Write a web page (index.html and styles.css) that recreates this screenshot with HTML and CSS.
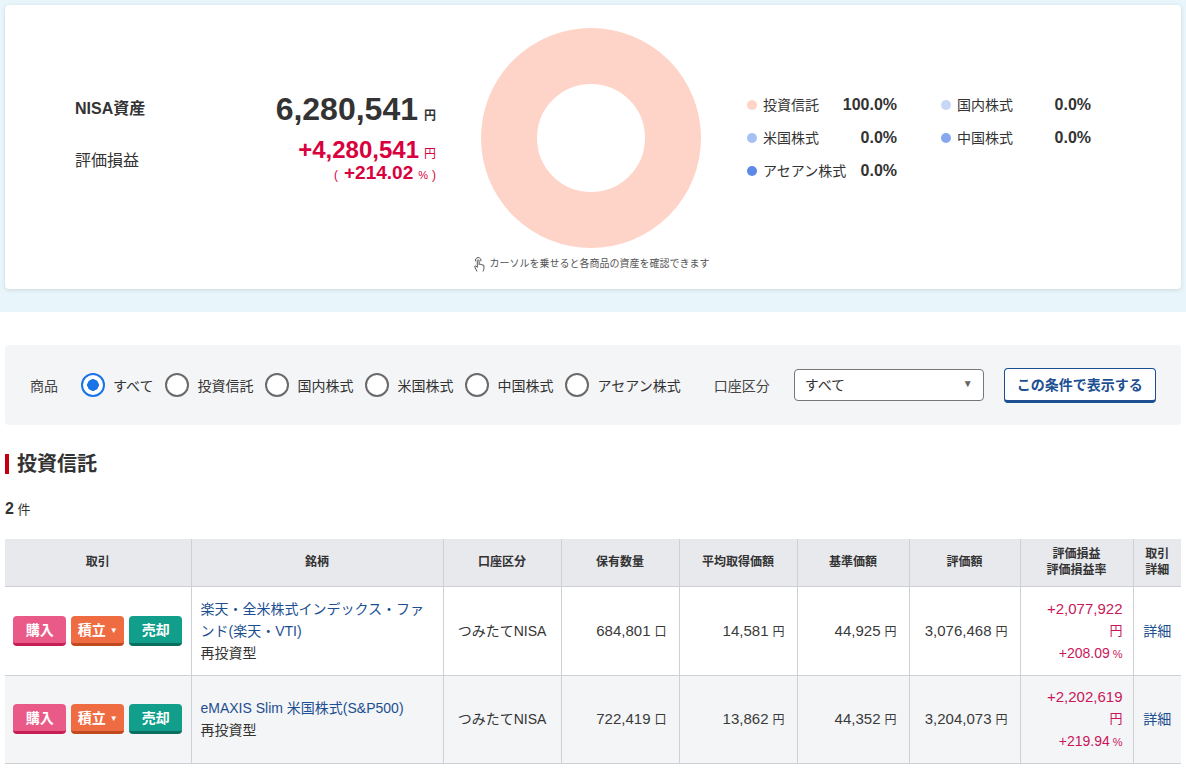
FILE: index.html
```html
<!DOCTYPE html>
<html lang="ja">

<head>
  <meta charset="UTF-8" />
  <meta name="viewport" content="width=device-width, initial-scale=1.0" />
  <title>NISA資産</title>
  <link rel="stylesheet" href="styles.css">
</head>

<body>
  <!-- 資産サマリー -->
  <div class="overview">
    <div class="card">
      <div class="summary">
        <div class="summary-row">
          <span class="summary-label total-label">NISA資産</span>
          <span class="total"><b>6,280,541</b><small>円</small></span>
        </div>
        <div class="summary-row">
          <span class="summary-label profit-label">評価損益</span>
          <div class="profit">
            <div class="profit-amount"><b>+4,280,541</b><small>円</small></div>
            <div class="profit-rate">(<b>+214.02</b><small>%</small>)</div>
          </div>
        </div>
      </div>
      <!-- 円グラフ -->
      <div class="donut"></div>
      <ul class="legend">
        <li><span class="dot dot-fund"></span>投資信託<span class="pct">100.0%</span></li>
        <li><span class="dot dot-jp"></span>国内株式<span class="pct">0.0%</span></li>
        <li><span class="dot dot-us"></span>米国株式<span class="pct">0.0%</span></li>
        <li><span class="dot dot-cn"></span>中国株式<span class="pct">0.0%</span></li>
        <li><span class="dot dot-asean"></span>アセアン株式<span class="pct">0.0%</span></li>
      </ul>
      <p class="hint">
        <svg width="13" height="16" viewBox="0 0 13 16" fill="none" stroke="#555" stroke-width="1" stroke-linejoin="round">
          <path d="M4 15.5 L1.8 11 C1.4 10.1 2.4 9.5 3 10.1 L4.3 11.4 V4.6 C4.3 3.5 6.1 3.5 6.1 4.6 V8.6 C6.1 7.8 7.7 7.8 7.7 8.6 V9 C7.7 8.2 9.3 8.2 9.3 9 V9.4 C9.3 8.7 10.9 8.7 10.9 9.6 V12.6 C10.9 13.8 10.4 14.8 9.9 15.5" />
          <path d="M2.6 5.4 A2.8 2.8 0 1 1 7.8 5.4" />
        </svg>
        カーソルを乗せると各商品の資産を確認できます
      </p>
    </div>
  </div>

  <!-- 絞り込み -->
  <form class="filter">
    <span class="filter-title">商品</span>
    <label class="opt"><input type="radio" name="kind" checked>すべて</label>
    <label class="opt"><input type="radio" name="kind">投資信託</label>
    <label class="opt"><input type="radio" name="kind">国内株式</label>
    <label class="opt"><input type="radio" name="kind">米国株式</label>
    <label class="opt"><input type="radio" name="kind">中国株式</label>
    <label class="opt"><input type="radio" name="kind">アセアン株式</label>
    <span class="filter-title account-title">口座区分</span>
    <div class="select">
      <select>
        <option>すべて</option>
        <option>つみたてNISA</option>
      </select>
    </div>
    <button type="button" class="submit">この条件で表示する</button>
  </form>

  <h2 class="section-title">投資信託</h2>
  <p class="count"><b>2</b> 件</p>

  <table class="holdings">
    <colgroup>
      <col style="width: 186px">
      <col style="width: 252px">
      <col style="width: 118px">
      <col style="width: 118px">
      <col style="width: 118px">
      <col style="width: 112px">
      <col style="width: 111px">
      <col style="width: 113px">
      <col style="width: 48px">
    </colgroup>
    <thead>
      <tr>
        <th>取引</th>
        <th>銘柄</th>
        <th>口座区分</th>
        <th>保有数量</th>
        <th>平均取得価額</th>
        <th>基準価額</th>
        <th>評価額</th>
        <th>評価損益<br>評価損益率</th>
        <th>取引<br>詳細</th>
      </tr>
    </thead>
    <tbody>
      <tr>
        <td class="trade">
          <a href="javaScript:;" class="btn btn-buy">購入</a><a href="javaScript:;" class="btn btn-plan">積立<i>▼</i></a><a href="javaScript:;" class="btn btn-sell">売却</a>
        </td>
        <td class="fund"><a href="javaScript:;">楽天・全米株式インデックス・ファンド(楽天・VTI)</a><br>再投資型</td>
        <td class="center">つみたてNISA</td>
        <td class="num">684,801<small>口</small></td>
        <td class="num">14,581<small>円</small></td>
        <td class="num">44,925<small>円</small></td>
        <td class="num">3,076,468<small>円</small></td>
        <td class="gain">+2,077,922<small class="unit-line">円</small><span class="rate">+208.09<small>%</small></span></td>
        <td class="center"><a href="javaScript:;">詳細</a></td>
      </tr>
      <tr>
        <td class="trade">
          <a href="javaScript:;" class="btn btn-buy">購入</a><a href="javaScript:;" class="btn btn-plan">積立<i>▼</i></a><a href="javaScript:;" class="btn btn-sell">売却</a>
        </td>
        <td class="fund"><a href="javaScript:;">eMAXIS Slim 米国株式(S&amp;P500)</a><br>再投資型</td>
        <td class="center">つみたてNISA</td>
        <td class="num">722,419<small>口</small></td>
        <td class="num">13,862<small>円</small></td>
        <td class="num">44,352<small>円</small></td>
        <td class="num">3,204,073<small>円</small></td>
        <td class="gain">+2,202,619<small class="unit-line">円</small><span class="rate">+219.94<small>%</small></span></td>
        <td class="center"><a href="javaScript:;">詳細</a></td>
      </tr>
    </tbody>
  </table>
</body>

</html>
```

FILE: styles.css
```css
* {
  margin: 0;
  padding: 0;
  box-sizing: border-box;
}

body {
  font-family: "Liberation Sans", "Noto Sans CJK JP", sans-serif;
  color: #333;
  background-color: #fff;
}

ul,
li {
  list-style: none;
}

a {
  color: #1c4f91;
  text-decoration: none;
}

/* 資産サマリー */
.overview {
  padding: 5px 5px 23px;
  background-color: #e8f5fb;
}

.card {
  display: grid;
  grid-template-columns: 361px 240px 1fr;
  grid-template-rows: 220px auto;
  column-gap: 35px;
  row-gap: 8px;
  padding: 23px 0 17px 70px;
  background-color: #fff;
  border-radius: 4px;
  box-shadow: 0 1px 4px rgba(0, 0, 0, 0.12);
}

.summary {
  align-self: center;
  margin-top: 1px;
}

.summary-row {
  display: flex;
  justify-content: space-between;
  align-items: center;
}

.summary-row + .summary-row {
  margin-top: 9px;
}

.summary-label {
  font-size: 16px;
  line-height: 20px;
}

.total-label {
  font-weight: bold;
}

.profit-label {
  margin-bottom: 5px;
}

.total {
  font-size: 32px;
  line-height: 40px;
  font-weight: bold;
}

.total small {
  margin-left: 6px;
  font-size: 12px;
  line-height: 1;
}

.profit {
  text-align: right;
  color: #d9003d;
}

.profit-amount {
  font-size: 24px;
  line-height: 24px;
}

.profit-amount small {
  margin-left: 5px;
  font-size: 12px;
  line-height: 1;
}

.profit-rate {
  font-size: 12px;
  line-height: 26px;
}

.profit-rate b {
  margin: 0 5px 0 6px;
  font-size: 19px;
  line-height: 1;
}

.profit-rate small {
  margin-right: 4px;
  font-size: 11px;
  line-height: 1;
}

.donut {
  justify-self: center;
  width: 220px;
  height: 220px;
  border: 56px solid #fdd4c7;
  border-radius: 50%;
}

.legend {
  align-self: center;
  display: grid;
  grid-template-columns: 150px 150px;
  column-gap: 44px;
  row-gap: 13px;
  margin-left: 1px;
}

.legend li {
  display: flex;
  align-items: center;
  font-size: 14px;
  line-height: 20px;
}

.dot {
  width: 10px;
  height: 10px;
  margin-right: 6px;
  border-radius: 50%;
}

.dot-fund {
  background-color: #fdd4c7;
}

.dot-jp {
  background-color: #c8d7f8;
}

.dot-us {
  background-color: #a7c0f4;
}

.dot-cn {
  background-color: #87a7ee;
}

.dot-asean {
  background-color: #5c88e8;
}

.pct {
  margin-left: auto;
  font-size: 16px;
  font-weight: bold;
}

.hint {
  grid-column: 2;
  justify-self: center;
  display: flex;
  align-items: center;
  gap: 4px;
  font-size: 10px;
  line-height: 16px;
  color: #555;
}

/* 絞り込み */
.filter {
  display: flex;
  align-items: center;
  height: 80px;
  margin: 33px 5px 0;
  padding-left: 25px;
  background-color: #f4f5f7;
  border-radius: 4px;
  font-size: 14px;
}

.filter-title {
  margin-right: 23px;
  color: #444;
}

.account-title {
  margin-left: 21px;
  margin-right: 24px;
}

.opt {
  display: flex;
  align-items: center;
  gap: 8px;
  margin-right: 12px;
  cursor: pointer;
}

.opt input {
  appearance: none;
  width: 24px;
  height: 24px;
  border: 2px solid #6a6a6a;
  border-radius: 50%;
  background-color: #fff;
}

.opt input:checked {
  border: 2.5px solid #1a73e8;
  background: radial-gradient(circle, #1a73e8 0 5.5px, #fff 6px);
}

.select {
  position: relative;
  width: 190px;
}

.select select {
  appearance: none;
  width: 100%;
  height: 32px;
  padding-left: 10px;
  border: 1px solid #777;
  border-radius: 4px;
  background-color: #fff;
  font-family: inherit;
  font-size: 14px;
  color: #333;
}

.select::after {
  content: "▼";
  position: absolute;
  top: 9px;
  right: 11px;
  font-size: 10px;
  color: #666;
  pointer-events: none;
}

.submit {
  width: 152px;
  height: 35px;
  margin-left: 20px;
  border: 1px solid #1d4f91;
  border-bottom-width: 3px;
  border-radius: 4px;
  background-color: #fff;
  font-family: inherit;
  font-size: 14px;
  font-weight: bold;
  color: #1d4f91;
}

/* 投資信託一覧 */
.section-title {
  margin: 29px 5px 0;
  padding-left: 8px;
  border-left: 4px solid #c4000e;
  font-size: 20px;
  line-height: 20px;
}

.count {
  margin: 25px 5px 0;
  font-size: 13px;
  line-height: 20px;
}

.count b {
  font-size: 16px;
}

.holdings {
  width: 1176px;
  margin: 19px 5px 0;
  border-collapse: collapse;
  table-layout: fixed;
  font-size: 14px;
}

.holdings th {
  height: 47px;
  background-color: #e8e9ed;
  font-size: 12px;
  line-height: 16px;
  border-right: 1px solid #cfd0d4;
  border-bottom: 1px solid #cfd0d4;
}

.holdings td {
  height: 89px;
  border-right: 1px solid #cfd0d4;
  border-bottom: 1px solid #cfd0d4;
  line-height: 22px;
}

.holdings tbody tr:nth-child(2) td {
  height: 88px;
}

.holdings th:last-child,
.holdings td:last-child {
  border-right: none;
}

.holdings tbody tr:nth-child(2) {
  background-color: #f4f5f7;
}

.trade {
  text-align: center;
  font-size: 0;
}

.btn {
  display: inline-block;
  width: 53px;
  height: 30px;
  margin: 0 2.5px;
  border-bottom: 3px solid;
  border-radius: 4px;
  font-size: 14px;
  font-weight: bold;
  line-height: 28px;
  color: #fff;
}

.btn i {
  margin-left: 4px;
  font-size: 8px;
  font-style: normal;
  vertical-align: 2px;
}

.btn-buy {
  background-color: #ea5a88;
  border-color: #c51f56;
}

.btn-plan {
  background-color: #ef6b41;
  border-color: #c04a1f;
}

.btn-sell {
  background-color: #119f8b;
  border-color: #0a6f61;
}

.fund {
  padding: 0 14px 0 9px;
}

.center {
  text-align: center;
}

.num {
  padding-right: 12px;
  text-align: right;
  font-size: 15px;
  color: #3a3a3a;
}

.num small {
  margin-left: 4px;
  font-size: 12px;
  line-height: 1;
}

.gain {
  padding-right: 10px;
  text-align: right;
  font-size: 15px;
  line-height: 21px;
  color: #c8175a;
}

.unit-line {
  display: block;
  font-size: 13px;
}

.rate {
  font-size: 14px;
}

.rate small {
  margin-left: 3px;
  font-size: 11px;
  line-height: 1;
}
```
